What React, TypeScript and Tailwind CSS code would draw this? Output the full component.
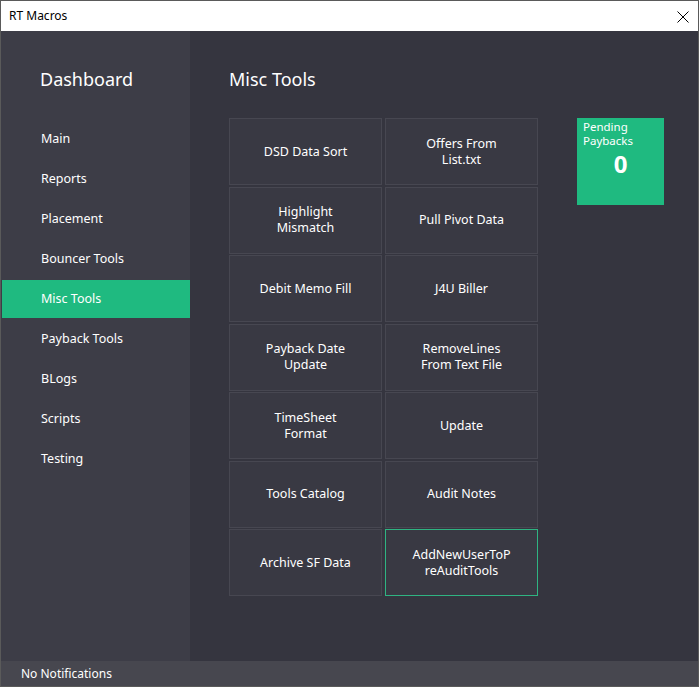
import React from "react";

const nav = ["Main", "Reports", "Placement", "Bouncer Tools", "Misc Tools", "Payback Tools", "BLogs", "Scripts", "Testing"];

const buttons: string[][] = [
  ["DSD Data Sort"], ["Offers From", "List.txt"],
  ["Highlight", "Mismatch"], ["Pull Pivot Data"],
  ["Debit Memo Fill"], ["J4U Biller"],
  ["Payback Date", "Update"], ["RemoveLines", "From Text File"],
  ["TimeSheet", "Format"], ["Update"],
  ["Tools Catalog"], ["Audit Notes"],
  ["Archive SF Data"], ["AddNewUserToP", "reAuditTools"],
];

export default function App() {
  return (
    <div
      className="w-[699px] h-[687px] flex flex-col border border-[#5a5a5a] bg-[#35353f] overflow-hidden"
      style={{ fontFamily: '"Noto Sans", "Open Sans", sans-serif' }}
    >
      {/* title bar */}
      <div className="h-[30px] bg-white flex items-center justify-between shrink-0">
        <span className="pl-[8px] text-[12px] text-black">RT Macros</span>
        <svg width="12" height="12" viewBox="0 0 12 12" className="mr-[9px] mt-[1px]">
          <path d="M0.5 0.5 L11.5 11.5 M11.5 0.5 L0.5 11.5" stroke="#000" strokeWidth="1" />
        </svg>
      </div>
      <div className="flex flex-1 min-h-0">
        {/* sidebar */}
        <div className="w-[189px] bg-[#3d3d47] flex flex-col shrink-0">
          <div className="pl-[39px] pt-[35px] h-[89px] text-[18px] text-white">Dashboard</div>
          <div className="flex flex-col">
            {nav.map((n) => (
              <div
                key={n}
                className={`h-[38px] mb-[2px] flex items-center text-[12.5px] text-white ${
                  n === "Misc Tools" ? "bg-[#1fba80] ml-[1px] pl-[39px]" : "pl-[40px]"
                }`}
              >
                {n}
              </div>
            ))}
          </div>
        </div>
        {/* main */}
        <div className="flex-1 bg-[#35353f] pl-[39px]">
          <div className="pt-[35px] h-[87px] text-[18px] text-white">Misc Tools</div>
          <div className="flex">
            <div className="grid grid-cols-[153px_153px] gap-x-[3px] gap-y-[1.5px] auto-rows-[67px]">
              {buttons.map((b, i) => (
                <div
                  key={i}
                  className={`flex flex-col items-center justify-center text-[12.5px] leading-[16px] text-white bg-[#393943] border ${
                    i === 13 ? "border-[#2fb482]" : "border-[#474751]"
                  }`}
                >
                  {b.map((l) => (
                    <span key={l}>{l}</span>
                  ))}
                </div>
              ))}
            </div>
            <div className="ml-[39px] w-[87px] h-[87px] bg-[#1fba80] text-white flex flex-col">
              <div className="pl-[6px] pt-[2px] text-[11.5px] leading-[14px]">
                <div>Pending</div>
                <div>Paybacks</div>
              </div>
              <div className="text-center text-[24px] font-bold leading-[26px] mt-[3px]">0</div>
            </div>
          </div>
        </div>
      </div>
      {/* status bar */}
      <div className="h-[25px] bg-[#47474f] flex items-center pl-[20px] text-[12px] text-white shrink-0">
        No Notifications
      </div>
    </div>
  );
}
